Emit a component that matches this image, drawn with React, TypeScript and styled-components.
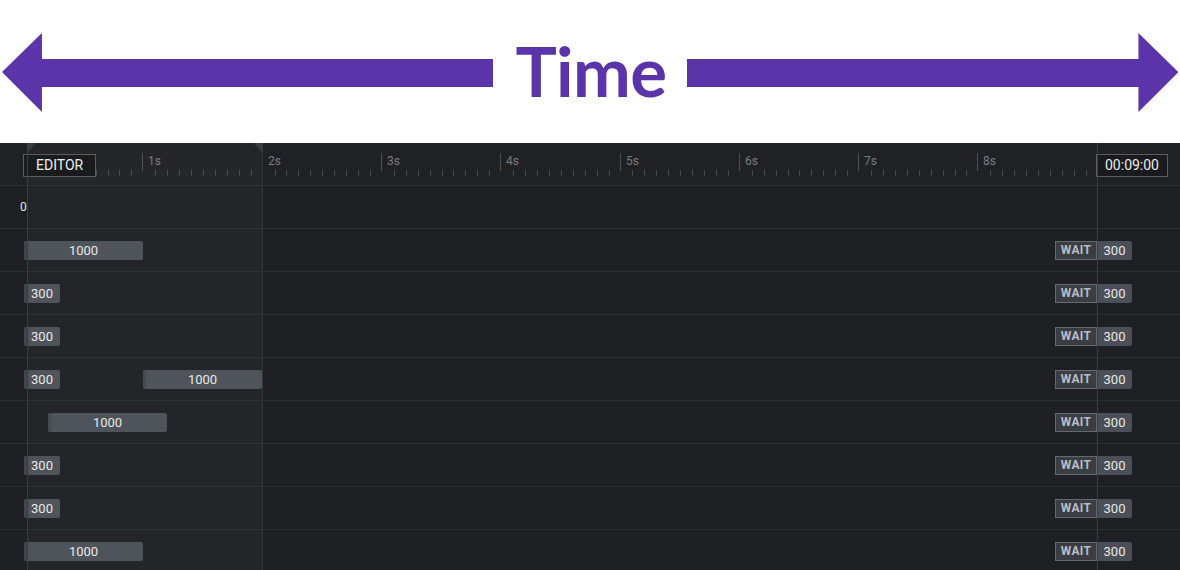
import React from "react";
import styled, { createGlobalStyle } from "styled-components";

const PX_PER_MS = 0.1193;
const ORIGIN = 24;
const toX = (ms: number) => ORIGIN + ms * PX_PER_MS;

const GlobalStyle = createGlobalStyle`
  html, body { margin: 0; padding: 0; background: #ffffff; }
  * { box-sizing: border-box; }
`;

const Page = styled.div`
  width: 1180px;
  height: 570px;
  overflow: hidden;
  display: flex;
  flex-direction: column;
  font-family: Roboto, "Liberation Sans", sans-serif;
`;

const Banner = styled.div`
  height: 143px;
  flex: none;
  display: flex;
  align-items: center;
  padding: 2px 2px 0 2px;
  background: #ffffff;
`;

const Title = styled.div`
  font-family: Lato, "Open Sans", sans-serif;
  font-weight: 700;
  font-size: 69px;
  line-height: 1;
  color: #5b34aa;
  margin: 0 20px 4px 22px;
  letter-spacing: -0.5px;
`;

const Timeline = styled.div`
  position: relative;
  flex: 1;
  background: #1f2023;
  display: flex;
  flex-direction: column;
`;

const Header = styled.div`
  position: relative;
  height: 43px;
  flex: none;
  background: #202124;
  border-bottom: 1px solid #2c2f33;
  display: flex;
  align-items: center;
  justify-content: space-between;
  padding: 2px 12px 0 23px;
`;

const Box = styled.div<{ $pad: number }>`
  position: relative;
  z-index: 2;
  height: 23px;
  padding: 0 ${(p) => p.$pad}px;
  display: flex;
  align-items: center;
  background: #1a1b1d;
  border: 1px solid #5a5e63;
  color: #ececec;
  font-size: 14px;
`;

const MajorTick = styled.div`
  position: absolute;
  top: 10px;
  width: 1px;
  height: 18px;
  background: #4c4f54;
`;

const MinorTick = styled.div`
  position: absolute;
  top: 27px;
  width: 1px;
  height: 6px;
  background: #45484d;
`;

const SecLabel = styled.span`
  position: absolute;
  top: 11px;
  font-size: 12px;
  color: #7a7d82;
`;

const Row = styled.div`
  position: relative;
  height: 43px;
  flex: none;
  border-bottom: 1px solid #2b2e32;
  display: flex;
  align-items: center;
  padding: 0 48px 0 20px;
`;

const ZeroLabel = styled.span`
  font-size: 12px;
  color: #e4e4e4;
`;

const Bar = styled.div`
  position: absolute;
  top: 12px;
  height: 19px;
  border-radius: 2px;
  background: #4b5058;
  box-shadow: inset 3px 0 0 #41454c;
  color: #e8e8e8;
  font-size: 13px;
  display: flex;
  align-items: center;
  justify-content: center;
`;

const Wait = styled.div`
  margin-left: auto;
  height: 19px;
  display: flex;
  position: relative;
  z-index: 2;
`;

const WaitTag = styled.div`
  width: 42px;
  background: #3a3e44;
  border: 1px solid #666a70;
  color: #b9bdc3;
  font-weight: 700;
  font-size: 12px;
  letter-spacing: 0.3px;
  display: flex;
  align-items: center;
  justify-content: center;
`;

const WaitValue = styled.div`
  width: 35px;
  background: #4b5058;
  border-radius: 0 2px 2px 0;
  color: #e8e8e8;
  font-size: 13px;
  display: flex;
  align-items: center;
  justify-content: center;
`;

const Selection = styled.div`
  position: absolute;
  top: 0;
  bottom: 0;
  left: 27px;
  width: 235px;
  background: rgba(255, 255, 255, 0.025);
  pointer-events: none;
  z-index: 1;
`;

const VLine = styled.div<{ $color: string }>`
  position: absolute;
  top: 0;
  bottom: 0;
  width: 1px;
  background: ${(p) => p.$color};
  z-index: 3;
  pointer-events: none;
`;

const Handle = styled.svg`
  position: absolute;
  top: 0;
  z-index: 3;
`;

function Arrow({ dir }: { dir: "left" | "right" }) {
  const w = 492;
  const d =
    dir === "left"
      ? `M0 39 L40 0 L40 26 L${w} 26 L${w} 54 L40 54 L40 79 Z`
      : `M${w} 39 L${w - 40} 0 L${w - 40} 26 L0 26 L0 54 L${w - 40} 54 L${w - 40} 79 Z`;
  return (
    <svg width={w} height={80} viewBox={`0 0 ${w} 80`}>
      <path d={d} fill="#5b34aa" />
    </svg>
  );
}

type Clip = { start: number; dur: number };

const rows: Clip[][] = [
  [{ start: 0, dur: 1000 }],
  [{ start: 0, dur: 300 }],
  [{ start: 0, dur: 300 }],
  [{ start: 0, dur: 300 }, { start: 1000, dur: 1000 }],
  [{ start: 200, dur: 1000 }],
  [{ start: 0, dur: 300 }],
  [{ start: 0, dur: 300 }],
  [{ start: 0, dur: 1000 }],
];

function Ruler() {
  const items: React.ReactNode[] = [];
  for (let s = 0; s < 9; s++) {
    for (let t = 1; t < 10; t++) {
      items.push(<MinorTick key={`m${s}-${t}`} style={{ left: Math.round(toX(s * 1000 + t * 100)) }} />);
    }
    if (s > 0) {
      const x = Math.round(toX(s * 1000)) - 1;
      items.push(<MajorTick key={`M${s}`} style={{ left: x }} />);
      items.push(
        <SecLabel key={`L${s}`} style={{ left: x + 6 }}>
          {s}s
        </SecLabel>
      );
    }
  }
  return <>{items}</>;
}

export default function App() {
  return (
    <>
      <GlobalStyle />
      <Page>
        <Banner>
          <Arrow dir="left" />
          <Title>Time</Title>
          <Arrow dir="right" />
        </Banner>
        <Timeline>
          <Selection />
          <VLine $color="#3a3e43" style={{ left: 27 }} />
          <VLine $color="#33363a" style={{ left: 262 }} />
          <VLine $color="#3b3e42" style={{ left: 1097 }} />
          <Handle width="9" height="10" style={{ left: 27 }}>
            <path d="M0 0 L9 0 L0 10 Z" fill="#3a3d42" />
          </Handle>
          <Handle width="9" height="10" style={{ left: 254 }}>
            <path d="M0 0 L9 0 L9 10 Z" fill="#3a3d42" />
          </Handle>
          <Header>
            <Ruler />
            <Box $pad={12}>EDITOR</Box>
            <Box $pad={8}>00:09:00</Box>
          </Header>
          <Row>
            <ZeroLabel>0</ZeroLabel>
          </Row>
          {rows.map((clips, i) => (
            <Row key={i}>
              {clips.map((c, j) => (
                <Bar
                  key={j}
                  style={{ left: Math.round(toX(c.start)), width: Math.round(c.dur * PX_PER_MS) }}
                >
                  {c.dur}
                </Bar>
              ))}
              <Wait>
                <WaitTag>WAIT</WaitTag>
                <WaitValue>300</WaitValue>
              </Wait>
            </Row>
          ))}
        </Timeline>
      </Page>
    </>
  );
}
